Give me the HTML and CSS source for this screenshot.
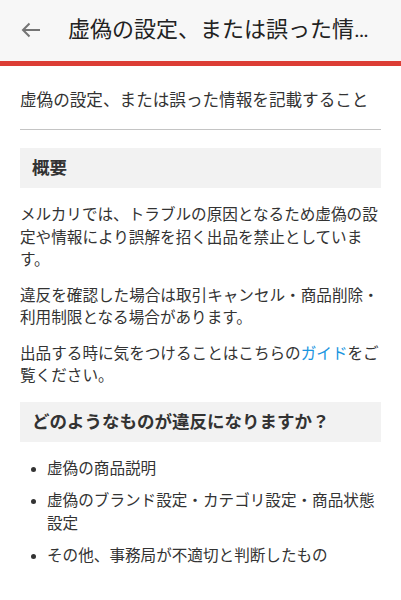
FILE: index.html
```html
<!DOCTYPE html>
<html lang="ja">
<head>
    <meta charset="UTF-8">
    <title>虚偽の設定、または誤った情報を記載すること</title>
    <meta name="viewport" content="width=device-width, initial-scale=1.0">
    <link rel="stylesheet" href="styles.css">
</head>
<body>
    <div class="app-header">
        <span class="back-btn">
            <svg width="20" height="16" viewBox="0 0 20 16">
                <path d="M19 8H2M8.5 1.5L2 8l6.5 6.5" fill="none" stroke="#757575" stroke-width="2"/>
            </svg>
        </span>
        <div class="header-title">虚偽の設定、または誤った情報を記載すること</div>
    </div>
    <div class="content">
        <div class="page-title">虚偽の設定、または誤った情報を記載すること</div>

        <div class="section-head">概要</div>
        <p>メルカリでは、トラブルの原因となるため虚偽の設定や情報により誤解を招く出品を禁止としています。</p>
        <p>違反を確認した場合は取引キャンセル・商品削除・利用制限となる場合があります。</p>
        <p>出品する時に気をつけることはこちらの<a href="#" class="link">ガイド</a>をご覧ください。</p>

        <div class="section-head">どのようなものが違反になりますか？</div>
        <ul class="rule-list">
            <li>虚偽の商品説明</li>
            <li>虚偽のブランド設定・カテゴリ設定・商品状態設定</li>
            <li>その他、事務局が不適切と判断したもの</li>
        </ul>
    </div>
</body>
</html>
```

FILE: styles.css
```css
body {
    margin: 0;
    padding: 0;
    background: #fff;
    color: #333;
    font-family: Roboto, 'Noto Sans CJK JP', sans-serif;
}
.app-header {
    display: flex;
    align-items: center;
    height: 60px;
    padding-bottom: 1px;
    background: #f7f7f7;
    border-bottom: 5px solid #dc3d35;
}
.back-btn {
    display: flex;
    width: 20px;
    margin-left: 21px;
    margin-right: 27px;
}
.header-title {
    flex: 1;
    min-width: 0;
    margin-right: 20px;
    font-size: 22px;
    line-height: 30px;
    color: #222;
    white-space: nowrap;
    overflow: hidden;
    text-overflow: ellipsis;
}
.content {
    padding: 0 20px 20px 20px;
}
.page-title {
    font-size: 16.6px;
    line-height: 24px;
    padding: 23px 0 16px 0;
    border-bottom: 1px solid #c4c4c4;
    color: #333;
}
.section-head {
    margin-top: 18px;
    height: 40px;
    line-height: 40px;
    padding: 0 12px;
    background: #f2f2f2;
    font-size: 17.5px;
    font-weight: bold;
    color: #333;
}
p {
    font-size: 15.6px;
    line-height: 22.5px;
    margin: 13px 0;
}
p + .section-head {
    margin-top: 14px;
}
.section-head + p {
    margin-top: 16px;
}
.link {
    color: #1a95e0;
    text-decoration: none;
}
.rule-list {
    margin: 16px 0 0 0;
    padding-left: 27px;
    font-size: 15.6px;
    line-height: 23px;
}
.rule-list li {
    margin-bottom: 9px;
}
```
